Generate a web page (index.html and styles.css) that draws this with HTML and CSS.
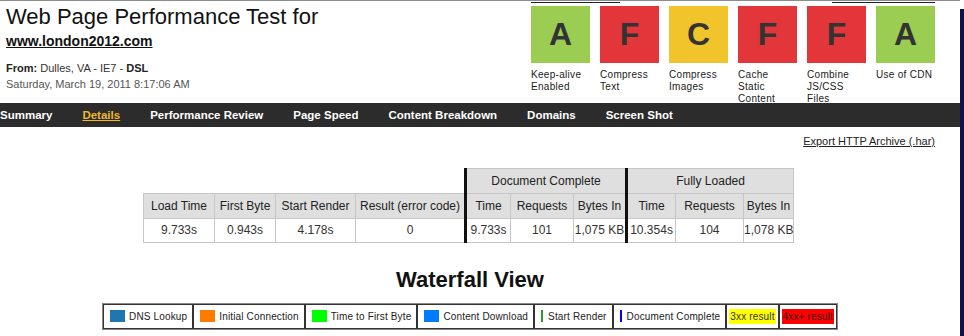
FILE: index.html
```html
<!DOCTYPE html>
<html lang="en">
<head>
    <meta charset="UTF-8">
    <title>Web Page Performance Test - Details</title>
    <link rel="stylesheet" href="styles.css">
</head>
<body>
    <div class="page">
        <header class="page-head">
            <div class="test-info">
                <h1>Web Page Performance Test for<br><a href="#">www.london2012.com</a></h1>
                <p class="from"><b>From:</b> Dulles, VA - IE7 - <b>DSL</b></p>
                <p class="date">Saturday, March 19, 2011 8:17:06 AM</p>
            </div>
            <div class="grade-area">
                <div class="rules"><span class="rule-left"></span><span class="rule-right"></span></div>
                <div class="grades">
                    <div class="grade">
                        <div class="score pass">A</div>
                        <span class="grade-label">Keep-alive Enabled</span>
                    </div>
                    <div class="grade">
                        <div class="score fail">F</div>
                        <span class="grade-label">Compress Text</span>
                    </div>
                    <div class="grade">
                        <div class="score warn">C</div>
                        <span class="grade-label">Compress Images</span>
                    </div>
                    <div class="grade">
                        <div class="score fail">F</div>
                        <span class="grade-label">Cache Static Content</span>
                    </div>
                    <div class="grade">
                        <div class="score fail">F</div>
                        <span class="grade-label">Combine JS/CSS Files</span>
                    </div>
                    <div class="grade">
                        <div class="score pass">A</div>
                        <span class="grade-label">Use of CDN</span>
                    </div>
                </div>
            </div>
        </header>

        <nav class="tabs">
            <a href="#">Summary</a>
            <a href="#" class="current">Details</a>
            <a href="#">Performance Review</a>
            <a href="#">Page Speed</a>
            <a href="#">Content Breakdown</a>
            <a href="#">Domains</a>
            <a href="#">Screen Shot</a>
        </nav>

        <div class="content">
            <div class="export"><a href="#">Export HTTP Archive (.har)</a></div>

            <table class="results">
                <colgroup>
                    <col class="w-load"><col class="w-byte"><col class="w-render"><col class="w-result">
                    <col class="w-time"><col class="w-req"><col class="w-bytes">
                    <col class="w-time2"><col class="w-req2"><col class="w-bytes2">
                </colgroup>
                <tr>
                    <td colspan="4" class="blank"></td>
                    <th colspan="3" class="split">Document Complete</th>
                    <th colspan="3" class="split">Fully Loaded</th>
                </tr>
                <tr>
                    <th>Load Time</th>
                    <th>First Byte</th>
                    <th>Start Render</th>
                    <th>Result (error code)</th>
                    <th class="split">Time</th>
                    <th>Requests</th>
                    <th>Bytes In</th>
                    <th class="split">Time</th>
                    <th>Requests</th>
                    <th>Bytes In</th>
                </tr>
                <tr>
                    <td>9.733s</td>
                    <td>0.943s</td>
                    <td>4.178s</td>
                    <td>0</td>
                    <td class="split">9.733s</td>
                    <td>101</td>
                    <td>1,075 KB</td>
                    <td class="split">10.354s</td>
                    <td>104</td>
                    <td>1,078 KB</td>
                </tr>
            </table>

            <h2>Waterfall View</h2>

            <table class="legend">
                <tr>
                    <td><span class="swatch dns"></span>DNS Lookup</td>
                    <td><span class="swatch connect"></span>Initial Connection</td>
                    <td><span class="swatch ttfb"></span>Time to First Byte</td>
                    <td><span class="swatch download"></span>Content Download</td>
                    <td><span class="marker render"></span>Start Render</td>
                    <td><span class="marker complete"></span>Document Complete</td>
                    <td class="tight"><span class="result-3xx">3xx result</span></td>
                    <td class="tight"><span class="result-4xx">4xx+ result</span></td>
                </tr>
            </table>
        </div>
    </div>
    <div class="edge"></div>
</body>
</html>
```

FILE: styles.css
```css
body {
    margin: 0;
    padding: 0;
    background: #fff;
    font-family: "Liberation Sans", Arial, sans-serif;
    color: #222;
}

.page {
    width: 960px;
    border-top: 1px solid #8c8c8c;
}

.page-head {
    display: flex;
    height: 102px;
}

.test-info {
    flex: 1;
    padding: 5px 0 0 6px;
}

h1 {
    margin: 0;
    font-size: 22px;
    line-height: 22px;
    font-weight: normal;
    color: #111;
}

h1 a {
    display: inline-block;
    font-size: 14px;
    line-height: 16px;
    font-weight: bold;
    color: #111;
}

.from,
.date {
    margin: 0;
    font-size: 11px;
    line-height: 16px;
}

.from {
    margin-top: 10px;
    color: #333;
}

.from b {
    color: #222;
}

.date {
    color: #555;
}

.grade-area {
    width: 404px;
    margin-right: 25px;
    padding-top: 1px;
}

.rules {
    display: flex;
    justify-content: space-between;
    height: 1px;
}

.rules span {
    background: #222;
}

.rule-left {
    width: 89px;
}

.rule-right {
    width: 103px;
}

.grades {
    display: flex;
    gap: 10px;
    margin-top: 3px;
}

.grade {
    width: 59px;
}

.score {
    height: 57px;
    display: flex;
    align-items: center;
    justify-content: center;
    font-size: 32px;
    font-weight: bold;
    color: #333;
}

.pass {
    background-color: #9bcd53;
}

.fail {
    background-color: #e3363a;
}

.warn {
    background-color: #f1c42c;
}

.grade-label {
    display: block;
    margin-top: 6px;
    font-size: 10px;
    line-height: 12px;
    letter-spacing: 0.3px;
    color: #1a1a1a;
}

.tabs {
    display: flex;
    gap: 30px;
    height: 24px;
    align-items: center;
    background-color: #2c2c2c;
}

.tabs a {
    font-size: 11.5px;
    font-weight: bold;
    color: #fff;
    text-decoration: none;
}

.tabs a.current {
    color: #f0b92a;
    text-decoration: underline;
}

.content {
    width: 940px;
}

.export {
    text-align: right;
    padding: 6px 5px 0 0;
    font-size: 11px;
    line-height: 16px;
}

.export a {
    color: #222;
}

.results {
    margin: 19px 0 0 143px;
    width: 650px;
    table-layout: fixed;
    border-collapse: collapse;
    font-size: 12px;
}

.w-load { width: 71px; }
.w-byte { width: 61px; }
.w-render { width: 80px; }
.w-result { width: 110px; }
.w-time { width: 45px; }
.w-req { width: 63px; }
.w-bytes { width: 53px; }
.w-time2 { width: 49px; }
.w-req2 { width: 68px; }
.w-bytes2 { width: 50px; }

.results th,
.results td {
    border: 1px solid #c6c6c6;
    padding: 5px 0;
    line-height: 14px;
    text-align: center;
    white-space: nowrap;
}

.results th {
    background-color: #dfdfdf;
    font-weight: normal;
    color: #222;
}

.results td {
    color: #333;
    padding: 4px 0 5px;
}

.results td.blank {
    border: none;
    border-bottom: 1px solid #c6c6c6;
}

.results .split {
    border-left: 3px solid #111;
}

h2 {
    margin: 24px 0 0;
    text-align: center;
    font-size: 22px;
    line-height: 26px;
    color: #111;
}

.legend {
    margin: 10px auto 0;
    border-collapse: separate;
    border-spacing: 0;
    border: 1px solid #888;
    font-size: 10px;
    letter-spacing: 0.15px;
}

.legend td {
    border: 1px solid #333;
    padding: 5px 5px 5px 6px;
    line-height: 13px;
    color: #222;
    white-space: nowrap;
}

.legend td.tight {
    padding: 4px 2px;
}

.swatch {
    display: inline-block;
    width: 15px;
    height: 12px;
    margin-right: 4px;
    vertical-align: -2px;
}

.dns { background-color: #1f77b0; }
.connect { background-color: #ff7b00; }
.ttfb { background-color: #00ff00; }
.download { background-color: #007bff; }

.marker {
    display: inline-block;
    width: 2px;
    height: 12px;
    margin-right: 5px;
    vertical-align: -2px;
}

.render { background-color: #28a028; }
.complete { background-color: #0000ff; }

.result-3xx,
.result-4xx {
    display: inline-block;
    padding: 1px 1px;
    line-height: 13px;
    color: #333;
}

.result-3xx { background-color: #ffff00; }
.result-4xx { background-color: #ff0000; color: #441111; }

.edge {
    position: fixed;
    top: 9px;
    right: 0;
    bottom: 0;
    width: 4px;
    background-color: #10104a;
}
```
